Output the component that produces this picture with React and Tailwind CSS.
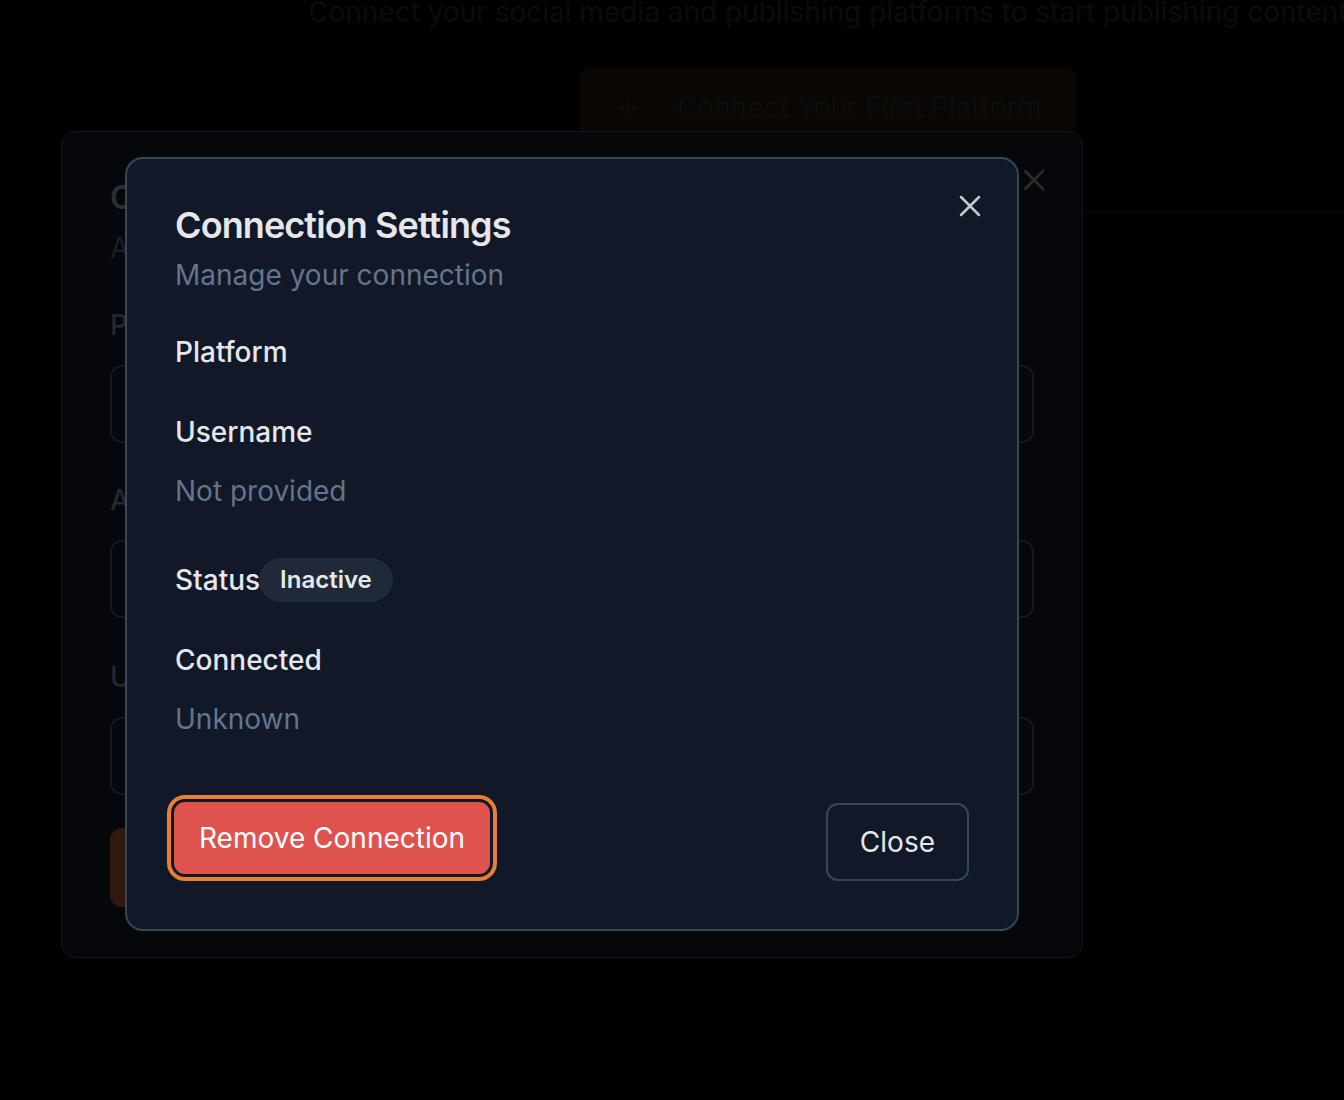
import React from 'react';

const CloseIcon = ({ className }) => (
    <svg viewBox="0 0 24 24" className={className} fill="none" stroke="currentColor" strokeWidth="2.5" strokeLinecap="round">
        <path d="M3 3L21 21M21 3L3 21" />
    </svg>
);

const App = () => {
    return (
        <div className="relative min-h-[1100px] w-full overflow-hidden bg-black font-[Inter,sans-serif]">
            {/* page behind the modals */}
            <div className="pl-[308px]">
                <p className="-mt-[2px] whitespace-nowrap text-[28px] leading-[28px] text-[#0c0c0c]">
                    Connect your social media and publishing platforms to start publishing content
                </p>
                <button className="ml-[272px] mt-[41px] flex h-[80px] w-[496px] items-center rounded-[12px] bg-[#0a0603] pl-[37px] text-[28px] text-[#0c0c0c]">
                    <svg viewBox="0 0 24 24" className="h-[22px] w-[22px]" fill="none" stroke="currentColor" strokeWidth="2" strokeLinecap="round">
                        <path d="M12 2v20M2 12h20" />
                    </svg>
                    <span className="ml-[38px]">Connect Your First Platform</span>
                </button>
                <div className="mt-[65px] border-t border-[#080808]" />
            </div>

            {/* first dialog, dimmed behind */}
            <div className="absolute left-[61px] top-[131px] h-[827px] w-[1022px] rounded-[14px] border border-[#14161a] bg-[#05070a] px-12 pt-12">
                <button className="absolute right-[36px] top-[36px] text-[#2b2b2b]">
                    <CloseIcon className="h-6 w-6" />
                </button>
                <h2 className="mt-[2px] text-[32px] font-semibold leading-[32px] text-[#2d2e31]">Connect Platform</h2>
                <p className="mt-[14px] text-[28px] leading-[40px] text-[#1d1f22]">Add a new publishing platform</p>

                <label className="mt-[37px] block text-[28px] font-medium leading-[40px] text-[#27282b]">Platform</label>
                <div className="mt-[20px] h-[78px] rounded-[12px] border-2 border-[#15171b]" />

                <label className="mt-[37px] block text-[28px] font-medium leading-[40px] text-[#27282b]">Account Name</label>
                <div className="mt-[20px] h-[78px] rounded-[12px] border-2 border-[#15171b]" />

                <label className="mt-[39px] block text-[28px] font-medium leading-[40px] text-[#27282b]">Username</label>
                <div className="mt-[20px] h-[78px] rounded-[12px] border-2 border-[#15171b]" />

                <button className="mt-[33px] h-[79px] w-[220px] rounded-[12px] bg-[#2f1b0e]" />
            </div>

            {/* connection settings dialog */}
            <div className="absolute left-[125px] top-[157px] w-[894px] rounded-[18px] border-2 border-[#3a4556] bg-[#111827] p-12">
                <button className="absolute right-[35px] top-[35px] text-[#c3c8d0]">
                    <CloseIcon className="h-6 w-6" />
                </button>

                <h2 className="text-[36px] font-semibold leading-[36px] tracking-[-0.9px] text-[#e5e7eb]">Connection Settings</h2>
                <p className="mt-[12px] text-[28px] leading-[40px] text-[#64748b]">Manage your connection</p>

                <div className="mt-[37px] text-[28px] font-medium leading-[40px] text-[#e5e7eb]">Platform</div>

                <div className="mt-[40px] text-[28px] font-medium leading-[40px] text-[#e5e7eb]">Username</div>
                <div className="mt-[19px] text-[28px] leading-[40px] text-[#64748b]">Not provided</div>

                <div className="mt-[47px] flex h-[44px] items-center">
                    <span className="text-[28px] font-medium leading-[40px] text-[#e5e7eb]">Status</span>
                    <span className="-ml-px flex h-[44px] items-center rounded-full bg-[#1f2937] px-[21px] text-[24px] font-semibold text-[#e5e7eb]">
                        Inactive
                    </span>
                </div>

                <div className="mt-[38px] text-[28px] font-medium leading-[40px] text-[#e5e7eb]">Connected</div>
                <div className="mt-[19px] text-[28px] leading-[40px] text-[#64748b]">Unknown</div>

                <div className="mt-[63px] flex items-start justify-between">
                    <button className="-ml-px h-[72px] rounded-[11px] bg-[#df534f] px-[25px] text-[28px] leading-[40px] text-white ring-4 ring-[#e97f35] ring-offset-3 ring-offset-[#111827]">
                        Remove Connection
                    </button>
                    <button className="mt-px h-[78px] rounded-[12px] border-2 border-[#3a4556] px-8 text-[28px] leading-[40px] text-[#e5e7eb]">
                        Close
                    </button>
                </div>
            </div>
        </div>
    );
};

export default App;
